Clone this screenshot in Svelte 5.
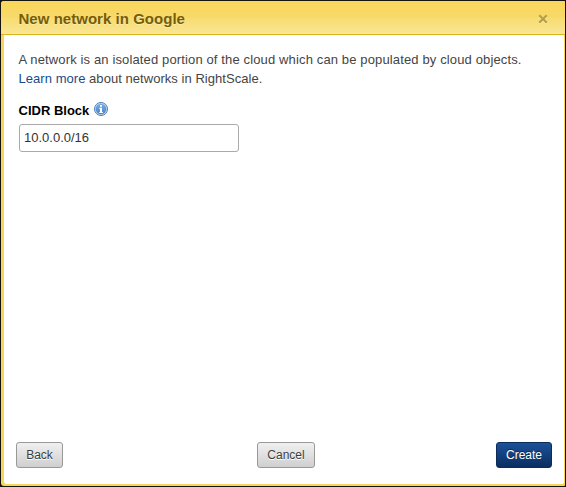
<script>
  let cidr = $state('10.0.0.0/16');
</script>

<div class="frame">
  <section class="dialog" role="dialog" aria-labelledby="title">
    <header>
      <h1 id="title">New network in Google</h1>
      <button class="close" aria-label="Close">
        <svg width="10" height="10" viewBox="0 0 10 10"><path d="M1.2 1.2 8.8 8.8M8.8 1.2 1.2 8.8" stroke="#b7a045" stroke-width="2.3" fill="none" /></svg>
      </button>
    </header>
    <div class="body">
      <p><span class="line one">A network is an isolated portion of the cloud which can be populated by cloud objects.</span><br /><span class="line two"><a href="#networks">Learn more</a> about networks in RightScale.</span></p>
      <div class="label">
        <label for="cidr">CIDR Block</label>
        <svg width="14" height="14" viewBox="0 0 14 14">
          <defs>
            <linearGradient id="info" x1="0" y1="0" x2="0" y2="1">
              <stop offset="0" stop-color="#79ace0" />
              <stop offset="1" stop-color="#4a86c8" />
            </linearGradient>
          </defs>
          <circle cx="7" cy="7" r="6.5" fill="#c5dcf1" stroke="#4a7eb6" />
          <circle cx="7" cy="7" r="5.3" fill="url(#info)" />
          <path d="M6 3h2v1.7H6zM5.3 5.7H8v4.2h.9V11H5.2V9.9H6V6.8h-.7z" fill="#fff" />
        </svg>
      </div>
      <input id="cidr" type="text" bind:value={cidr} />
    </div>
    <footer>
      <button class="btn back">Back</button>
      <button class="btn cancel">Cancel</button>
      <button class="btn create">Create</button>
    </footer>
  </section>
</div>

<style>
  :global(body) { margin: 0; background: #000; }
  .frame {
    box-sizing: border-box;
    width: 566px;
    height: 487px;
    padding: 1px;
    background: #17130f;
    font-family: "Liberation Sans", Arial, sans-serif;
  }
  .dialog {
    box-sizing: border-box;
    height: 485px;
    display: flex;
    flex-direction: column;
    padding: 0 1px 2px 3px;
    background: #f8d65a;
    border-radius: 3px 1px 1px 3px;
    overflow: hidden;
  }
  header {
    box-sizing: border-box;
    flex: none;
    height: 34px;
    margin: 0 -1px 0 -3px;
    padding: 0 17px 0 17.5px;
    display: flex;
    align-items: center;
    justify-content: space-between;
    background: linear-gradient(#f8d75b 0%, #f8d968 48%, #f7dc70 52%, #fae694 100%);
    border-bottom: 1px solid #d9b520;
  }
  h1 {
    margin: 0;
    padding-top: 2px;
    font-size: 15px;
    line-height: 18px;
    letter-spacing: 0.03px;
    color: #755d08;
    text-shadow: 0 1px 0 #fcebac;
  }
  .close {
    padding: 3px 0 0;
    border: 0;
    background: none;
    line-height: 0;
    filter: drop-shadow(0 1px 0 #fcebac);
  }
  .body {
    flex: 1;
    padding: 15px 15px 0;
    background: #fff;
  }
  p {
    margin: 0 0 14px;
    font-size: 13px;
    line-height: 19px;
    color: #444;
    white-space: nowrap;
  }
  .line { margin-left: -0.5px; }
  .one { letter-spacing: 0.135px; }
  .two { letter-spacing: 0.045px; }
  a { color: #174b8d; text-decoration: none; }
  .label {
    display: flex;
    align-items: center;
    height: 16px;
    margin-bottom: 6px;
    font-size: 13px;
    font-weight: bold;
    color: #000;
  }
  .label label { padding-top: 1px; margin-left: -0.5px; }
  .label svg { margin: -2px 0 0 4.5px; }
  input {
    box-sizing: border-box;
    display: block;
    width: 220px;
    height: 28px;
    padding: 0 4px 1px;
    border: 1px solid #aaa;
    border-radius: 3px;
    background: #fff;
    color: #333;
    font: 13px "Liberation Sans", Arial, sans-serif;
  }
  footer {
    flex: none;
    height: 42px;
    padding: 0 12px;
    display: flex;
    justify-content: space-between;
    align-items: flex-start;
    background: #fff;
    border-radius: 0 0 2px 3px;
  }
  .btn {
    box-sizing: border-box;
    height: 26px;
    padding: 0 0 1px;
    border: 1px solid #999;
    border-radius: 3px;
    background: linear-gradient(#f0f0f0, #cfcfcf);
    color: #3c3c3c;
    font: 12px "Liberation Sans", Arial, sans-serif;
    text-shadow: 0 1px 0 #fff;
  }
  .back { width: 47px; }
  .cancel { width: 58px; margin-left: 13px; }
  .create {
    width: 56px;
    border-color: #0c2d5c;
    background: linear-gradient(#1b529a, #0b2e60);
    color: #fff;
    text-shadow: 0 -1px 0 #0a2750;
  }
</style>
